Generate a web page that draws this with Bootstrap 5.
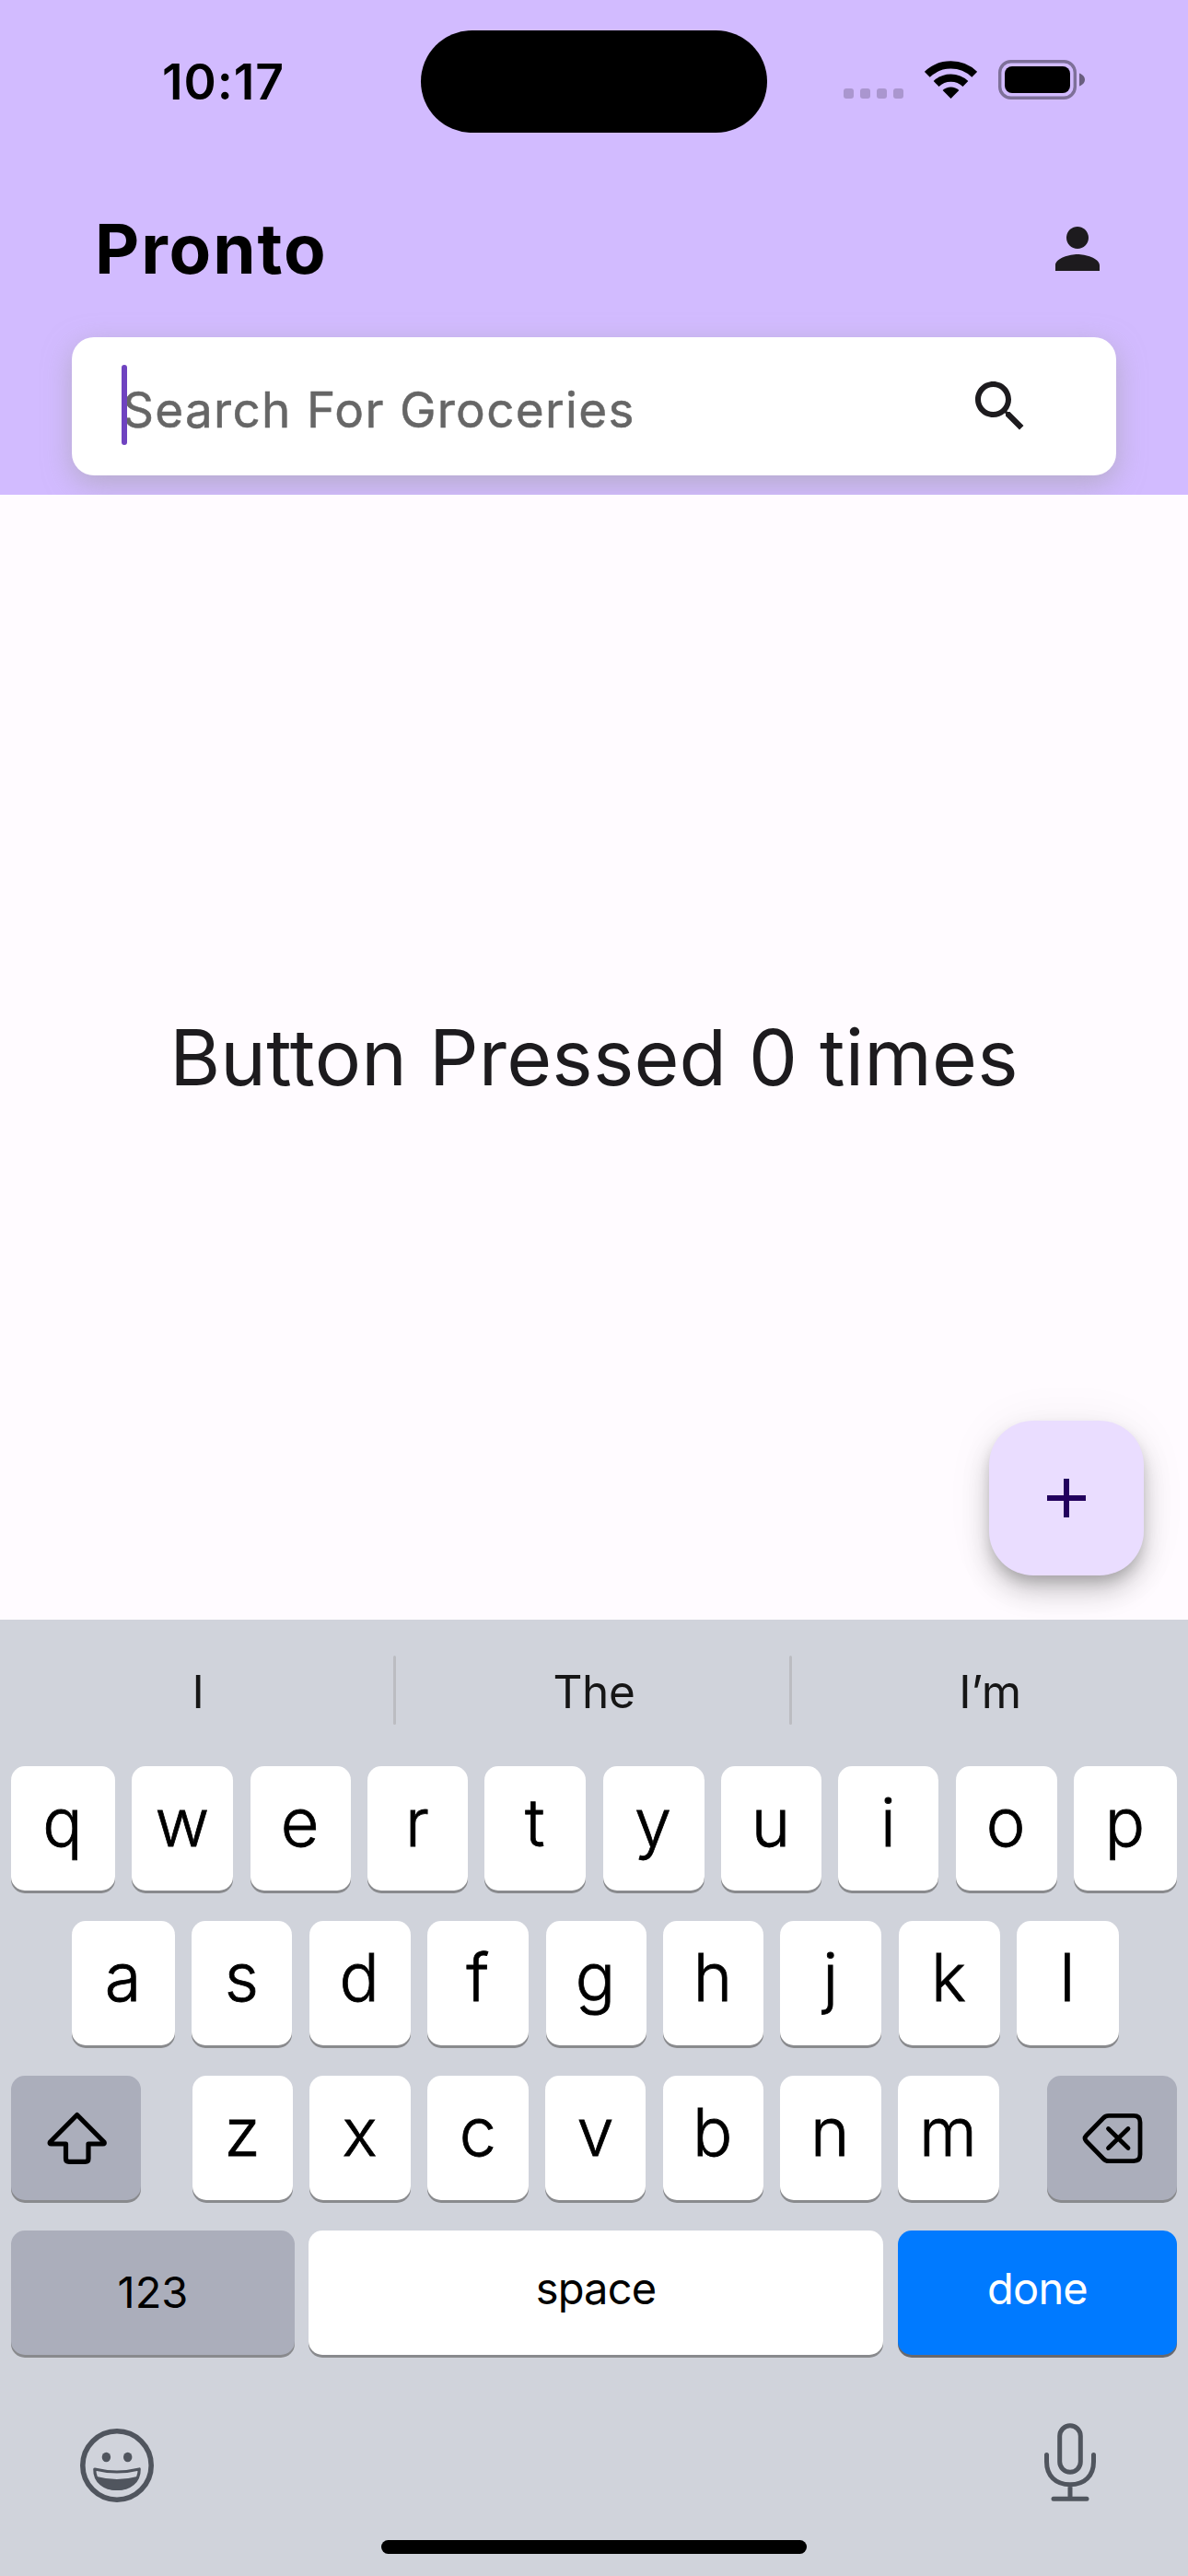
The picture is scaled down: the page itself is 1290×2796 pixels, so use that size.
<!DOCTYPE html>
<html lang="en">
<head>
<meta charset="utf-8">
<meta name="viewport" content="width=device-width, initial-scale=1">
<title>Pronto</title>
<link href="https://cdn.jsdelivr.net/npm/bootstrap@5.3.0/dist/css/bootstrap.min.css" rel="stylesheet">
<style>
  body { font-family: Inter, Roboto, "Liberation Sans", sans-serif; background: #fffbff; color: #1d1b1e; }
  svg { display: block; flex: none; }
  .phone { width: 1290px; height: 2796px; overflow: hidden; }

  .app-header { height: 537px; background: #d2bbff; overflow: hidden; }
  .status-bar { height: 177px; padding-top: 33.400px; display: grid; grid-template-columns: 457px 376px 1fr; }
  .status-bar > * { height: 111px; }
  .clock { padding: 0 0 0 176px; font-size: 53.500px; font-weight: 600; color: #000; letter-spacing: .9px; }
  .island { background: #000; border-radius: 56px; }
  .indicators { padding: 32px 0 0 83px; gap: 23px; }
  .title-bar { height: 189px; padding: 0 84px 3px 103px; }
  .app-title { font-size: 74.500px; font-weight: 700; color: #000; line-height: 90px; letter-spacing: 1.900px; }
  .search-box { height: 150px; margin: 0 78px; padding: 0 90px 0 54px; background: #fff; border-radius: 24px; box-shadow: 0 9px 30px rgba(158,158,158,.55); }
  .caret { width: 6px; height: 87px; margin-top: -3px; border-radius: 3px; background: #6f43c0; z-index: 1; }
  .hint { margin: 7px 0 0 -5px; font-size: 53px; line-height: 64px; color: #666; letter-spacing: 1.300px; -webkit-text-stroke: .5px #666; }

  .content { height: 1221px; }
  .counter { padding-top: 1px; font-size: 84px; line-height: 100px; letter-spacing: .2px; }
  .fab { position: absolute; right: 48px; bottom: 48px; width: 168px; height: 168px; border: 0; border-radius: 48px; background: #eaddff; box-shadow: 0 9px 15px -3px rgba(0,0,0,.2), 0 18px 30px rgba(0,0,0,.18), 0 3px 54px rgba(0,0,0,.06); }

  .keyboard { height: 1038px; background: #d0d3db; color: #000; }
  .suggestions { display: grid; grid-template-columns: 427px 3px 427px 3px 430px; align-items: center; height: 159px; padding-bottom: 4px; font-size: 49.500px; color: #161616; }
  .suggestions > div { line-height: 60px; padding-left: 3px; letter-spacing: -.3px; }
  .suggestions > :last-child { padding-left: 0; }
  .bar-line { height: 75px; background: #bcbdc2; border-radius: 2px; margin-bottom: 2px; }
  .key-row { display: grid; height: 135px; margin-bottom: 33px; }
  .row-q { grid-template-columns: 113px 110px 109px 109px 110px 110px 109px 109px 110px 112px; padding: 0 12px; justify-content: space-between; }
  .row-a { grid-template-columns: 112px 109px 110px 110px 109px 109px 110px 110px 111px; padding: 0 75px 0 78px; justify-content: space-between; }
  .row-z { grid-template-columns: 141px 876px 141px; padding: 0 12px; column-gap: 56px; }
  .row-z > :last-child { margin-left: -4px; margin-right: 4px; }
  .letters { display: grid; grid-template-columns: 109px 110px 110px 109px 109px 110px 110px; justify-content: space-between; }
  .row-space { grid-template-columns: 308px 624px 1fr; padding: 0 12px; column-gap: 15px; }
  .key { display: flex; align-items: center; justify-content: center; height: 135px; padding: 0 1px 12px 0; border: 0; border-radius: 15px; background: #fff; box-shadow: 0 3px 0 #898a8d; color: #000; font-size: 72px; font-weight: 300; line-height: 1.2; -webkit-text-stroke: .8px #000; }
  .key-dark { background: #abaebb; padding: 0; }
  .key-word { font-size: 47px; font-weight: 400; padding: 0 0 9px; letter-spacing: -.8px; -webkit-text-stroke: 0; }
  .key-num { padding: 0 0 1px; letter-spacing: 0; }
  .key-done { margin-left: 1px; background: #007aff; color: #fff; box-shadow: 0 3px 0 #68696d; }
  .dock { height: 201px; padding: 74px 100px 0 87px; }
  .home-bar { width: 462px; height: 15px; border-radius: 8px; background: #000; }
</style>
</head>
<body>
<div class="phone d-flex flex-column">
  <header class="app-header">
    <div class="status-bar">
      <div class="clock d-flex align-items-center">10:17</div>
      <div class="island"></div>
      <div class="indicators d-flex align-items-start">
        <svg width="65" height="43" viewBox="0 0 65 43" fill="#aa96cf"><rect y="31" width="11" height="11" rx="3"/><rect x="18" y="31" width="11" height="11" rx="3"/><rect x="36" y="31" width="11" height="11" rx="3"/><rect x="54" y="31" width="11" height="11" rx="3"/></svg>
        <svg width="57" height="43" viewBox="0 0 57 43"><g fill="none" stroke="#000" stroke-width="8.4"><path d="M2.8 15.8A37 37 0 0 1 54.2 15.8"/><path d="M12.6 26A23 23 0 0 1 44.4 26"/></g><path d="M28.5 42 19.6 33A13 13 0 0 1 37.4 33Z"/></svg>
        <svg width="94" height="43" viewBox="0 0 94 43"><rect x="1.7" y="1.7" width="81.6" height="39.6" rx="12" fill="none" stroke="#000" stroke-opacity=".4" stroke-width="3.4"/><rect x="7" y="7" width="71" height="29" rx="8"/><path d="M88 14.5c3.500 1.300 6 4 6 7s-2.500 5.700-6 7z" fill-opacity=".5"/></svg>
      </div>
    </div>
    <div class="title-bar d-flex align-items-center justify-content-between">
      <h1 class="app-title m-0">Pronto</h1>
      <svg width="72" height="72" viewBox="0 0 24 24" fill="#1d1b1e"><path d="M12 12c2.210 0 4-1.790 4-4s-1.790-4-4-4-4 1.790-4 4 1.790 4 4 4zm0 2c-2.670 0-8 1.340-8 4v2h16v-2c0-2.660-5.330-4-8-4z"/></svg>
    </div>
    <div class="search-box d-flex align-items-center">
      <span class="caret"></span>
      <span class="hint">Search For Groceries</span>
      <svg class="ms-auto" width="72" height="72" viewBox="0 0 24 24" fill="#1d1b1e"><path d="M15.500 14h-.79l-.28-.27C15.410 12.590 16 11.110 16 9.500 16 5.910 13.090 3 9.500 3S3 5.910 3 9.500 5.910 16 9.500 16c1.610 0 3.090-.59 4.230-1.570l.27.28v.79l5 4.990L20.490 19l-4.990-5zm-6 0C7.010 14 5 11.990 5 9.500S7.010 5 9.500 5 14 7.010 14 9.500 11.990 14 9.500 14z"/></svg>
    </div>
  </header>

  <main class="content position-relative d-flex align-items-center justify-content-center">
    <div class="counter">Button Pressed 0 times</div>
    <button class="fab d-flex align-items-center justify-content-center" aria-label="Add"><svg width="72" height="72" viewBox="0 0 24 24" fill="#22005d"><path d="M19 13h-6v6h-2v-6H5v-2h6V5h2v6h6v2z"/></svg></button>
  </main>

  <section class="keyboard">
    <div class="suggestions text-center">
      <div>I</div><span class="bar-line"></span><div>The</div><span class="bar-line"></span><div>I’m</div>
    </div>
    <div class="key-row row-q">
      <button class="key">q</button><button class="key">w</button><button class="key">e</button><button class="key">r</button><button class="key">t</button><button class="key">y</button><button class="key">u</button><button class="key">i</button><button class="key">o</button><button class="key">p</button>
    </div>
    <div class="key-row row-a">
      <button class="key">a</button><button class="key">s</button><button class="key">d</button><button class="key">f</button><button class="key">g</button><button class="key">h</button><button class="key">j</button><button class="key">k</button><button class="key">l</button>
    </div>
    <div class="key-row row-z">
      <button class="key key-dark" aria-label="Shift"><svg width="66" height="58" viewBox="0 0 66 58" fill="none" stroke="#000" stroke-width="5.200" stroke-linejoin="round"><path d="M33.700 3.500 4.400 33Q3.500 35 5.700 35H21.500V51Q21.500 54.300 25 54.300H42.500Q46 54.300 46 51V35H61.700Q63.900 35 63 33Z"/></svg></button>
      <div class="letters">
        <button class="key">z</button><button class="key">x</button><button class="key">c</button><button class="key">v</button><button class="key">b</button><button class="key">n</button><button class="key">m</button>
      </div>
      <button class="key key-dark" aria-label="Delete"><svg width="66" height="56" viewBox="0 0 66 56" fill="none" stroke="#000" stroke-width="4.800" stroke-linecap="round" stroke-linejoin="round"><path d="M29 3.400H56Q63 3.400 63 10.400V45.600Q63 52.600 56 52.600H29Q25.500 52.600 23 50L4.500 31Q1.700 28 4.500 25L23 6Q25.500 3.400 29 3.400Z"/><path d="M28.500 17.500 50 38.500M50 17.500 28.500 38.500"/></svg></button>
    </div>
    <div class="key-row row-space mb-0">
      <button class="key key-dark key-word key-num">123</button>
      <button class="key key-word">space</button>
      <button class="key key-word key-done">done</button>
    </div>
    <div class="dock d-flex align-items-start justify-content-between">
      <svg class="mt-1" width="80" height="82" viewBox="0 0 80 82"><circle cx="40" cy="42" r="37.200" fill="none" stroke="#50555e" stroke-width="5.600"/><ellipse cx="28.400" cy="33" rx="4.700" ry="5.200" fill="#50555e"/><ellipse cx="51.700" cy="33" rx="4.700" ry="5.200" fill="#50555e"/><path d="M15.800 46Q40 52 64.200 46C64.500 60 53.500 67.500 40 67.500S15.500 60 15.800 46Z" fill="#d0d3db" stroke="#50555e" stroke-width="3.200" stroke-linejoin="round"/><path d="M18 54Q40 60 62 54C59.500 63.500 50 69 40 69S20.500 63.500 18 54Z" fill="#50555e"/></svg>
      <svg width="56" height="86" viewBox="0 0 56 86" fill="none" stroke="#50555e" stroke-width="5" stroke-linecap="round"><rect x="16.700" y="2.800" width="22.600" height="50.500" rx="11.300"/><path d="M2.500 34.500V42C2.500 57 12 66.700 28 66.700S53.500 57 53.500 42V34.500M28 67V82M10 82.300H46"/></svg>
    </div>
    <div class="home-bar mx-auto"></div>
  </section>
</div>
<script src="https://cdn.jsdelivr.net/npm/bootstrap@5.3.0/dist/js/bootstrap.bundle.min.js"></script>
</body>
</html>
